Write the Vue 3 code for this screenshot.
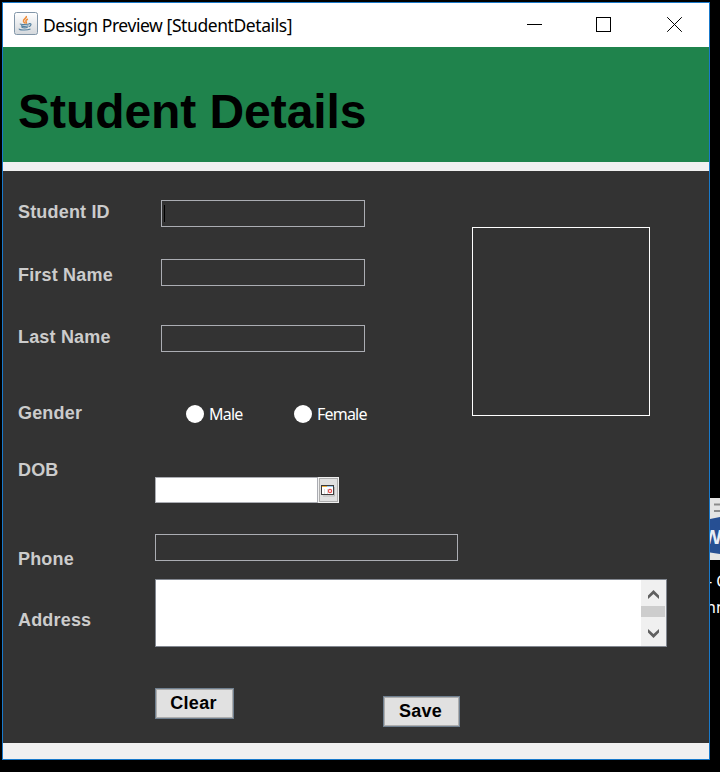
<script setup>
import { ref } from 'vue'

const student = ref({ id: '', firstName: '', lastName: '', gender: '', dob: '', phone: '', address: '' })
</script>

<template>
  <div class="desktop">
    <main class="window">
      <header class="titlebar">
        <svg class="java" width="24" height="23" viewBox="0 0 24 23">
          <defs>
            <linearGradient id="tile" x1="0" y1="0" x2="0" y2="1">
              <stop offset="0" stop-color="#ffffff" />
              <stop offset="1" stop-color="#d4d8dc" />
            </linearGradient>
          </defs>
          <rect x=".5" y=".5" width="23" height="22" rx="2" fill="url(#tile)" stroke="#8296a8" />
          <path d="M12.300 4c1 2.200-3.500 3-2.800 5.300.3.900 1 1.200 1.400 2M13.800 7c-1.700 1-2.500 1.800-1.500 3.200.3.600 0 1-.6 1.600" fill="none" stroke="#ef8a35" stroke-width="1.500" />
          <path d="M6.500 11.800c-1.500.8 7.500 1 9.300 0M7 13.600c1.500.8 5.500.8 7.500.2M7.500 15.200c1.500.7 4.500.7 6.200.1M15 11.600c2.800-.5 2.500 2.400-.2 3M5.500 16.800c-1.800 1.300 7.500 1.800 11 .2" fill="none" stroke="#54809f" stroke-width="1.200" />
        </svg>
        <span class="caption">Design Preview [StudentDetails]</span>
        <div class="controls">
          <svg width="15" height="15" viewBox="0 0 15 15"><path d="M0 7.500H15" /></svg>
          <svg class="maximize" width="15" height="15" viewBox="0 0 15 15"><rect x=".5" y=".5" width="14" height="14" /></svg>
          <svg width="15" height="15" viewBox="0 0 15 15"><path d="M.2.200 14.800 14.800M14.800.200.200 14.800" /></svg>
        </div>
      </header>

      <section class="banner"><h1>Student Details</h1></section>

      <form class="form" @submit.prevent>
        <div class="upper">
          <div class="identity">
            <div class="row row-id">
              <label>Student ID</label>
              <div class="field"><i class="caret"></i><input v-model="student.id" /></div>
            </div>
            <div class="row row-first">
              <label>First Name</label>
              <div class="field"><input v-model="student.firstName" /></div>
            </div>
            <div class="row row-last">
              <label>Last Name</label>
              <div class="field"><input v-model="student.lastName" /></div>
            </div>
            <div class="row row-gender">
              <label>Gender</label>
              <div class="radios">
                <span class="radio"><i></i><b class="male">Male</b></span>
                <span class="radio"><i></i><b class="female">Female</b></span>
              </div>
            </div>
          </div>
          <div class="photo"></div>
        </div>

        <div class="row row-dob">
          <label>DOB</label>
          <div class="date">
            <input v-model="student.dob" />
            <div class="picker">
              <svg width="14" height="12" viewBox="0 0 14 12">
                <path d="M2 11H13.500V2" fill="none" stroke="#b9b9b9" />
                <rect x=".5" y=".5" width="12" height="9" fill="#fff" stroke="#3c3c3c" />
                <path d="M1 1.500H6" stroke="#f0b040" />
                <path d="M6 1.500H12" stroke="#9cc8ee" />
                <path d="M3.500 4V9M6.500 4V9" stroke="#ddd" />
                <circle cx="9" cy="6" r="1.600" fill="#fff" stroke="#e05050" stroke-width="1.200" />
              </svg>
            </div>
          </div>
        </div>
        <div class="row row-phone">
          <label>Phone</label>
          <div class="field phone"><input v-model="student.phone" /></div>
        </div>
        <div class="row row-address">
          <label>Address</label>
          <div class="area">
            <textarea v-model="student.address"></textarea>
            <div class="scroll">
              <svg width="11" height="9" viewBox="0 0 11 9"><path d="M0 9V5.500L5.500 0 11 5.500V9L5.500 4Z" /></svg>
              <div class="thumb"></div>
              <svg width="11" height="9" viewBox="0 0 11 9"><path d="M0 0V3.500L5.500 9 11 3.500V0L5.500 5Z" /></svg>
            </div>
          </div>
        </div>
        <div class="actions">
          <button class="clear" type="button">Clear</button>
          <button class="save" type="button">Save</button>
        </div>
      </form>
    </main>

    <aside class="shortcut">
      <svg width="10" height="62" viewBox="0 0 10 62">
        <rect width="10" height="62" fill="#e4e4e4" />
        <path d="M4 6.500H10M4 13H10" stroke="#8b8b8b" stroke-width="2" />
        <path d="M0 21 10 19V56L0 54.500Z" fill="#264f93" />
      </svg>
      <span class="glyph">W</span>
      <span class="line one">- C</span>
      <span class="line two">nn</span>
    </aside>
  </div>
</template>

<style>
body { background: #000; }
</style>

<style scoped>
* { box-sizing: border-box; }
.desktop {
  display: flex;
  width: 720px;
  height: 772px;
  padding: 2px 0 0 2px;
  overflow: hidden;
  background: #000;
  font-family: "Liberation Sans", Arial, sans-serif;
}
.window {
  flex: none;
  width: 708px;
  height: 758px;
  border: 1px solid #1979ca;
  background: #f0f0f0;
}
.titlebar {
  display: flex;
  height: 44px;
  padding: 9px 27px 0 11px;
  background: #fff;
}
.java { flex: none; }
.caption {
  margin-left: 5px;
  font: 17.500px/26px "Noto Sans", "Open Sans", sans-serif;
  letter-spacing: -0.420px;
  white-space: nowrap;
  color: #000;
}
.controls {
  display: flex;
  margin: 5px 0 0 auto;
}
.controls svg { fill: none; stroke: #000; stroke-width: 1; }
.controls .maximize { margin: 0 56px 0 54px; }
.banner {
  height: 115px;
  padding: 38px 0 0 15px;
  background: #1f834c;
}
h1 {
  margin: 0;
  font-size: 48px;
  line-height: 54px;
  letter-spacing: -0.060px;
  color: #000;
  white-space: nowrap;
}
.form {
  height: 572px;
  margin-top: 9px;
  padding-left: 15px;
  background: #333;
}
.upper { display: flex; height: 269px; }
.identity { width: 454px; }
.photo {
  width: 178px;
  height: 189px;
  margin-top: 56px;
  border: 1px solid #fff;
}
.row { display: flex; align-items: flex-start; }
label {
  flex: none;
  width: 143px;
  font-size: 18px;
  font-weight: bold;
  line-height: 20px;
  letter-spacing: 0.180px;
  color: #ccc;
}
.field {
  display: flex;
  width: 204px;
  height: 27px;
  padding: 0 2px;
  border: 1px solid #abadb3;
}
.field input, .date input {
  flex: 1;
  min-width: 0;
  padding: 0;
  border: 0;
  outline: 0;
  background: transparent;
  color: #000;
}
.caret { width: 1px; height: 17px; margin-top: 4px; background: #000; }
.row-id { height: 69px; padding-top: 29px; }
.row-id label { margin-top: 2px; }
.row-first { height: 65px; padding-top: 19px; }
.row-first label { margin-top: 6px; }
.row-last { height: 75px; padding-top: 20px; }
.row-last label { margin-top: 2px; }
.row-gender { height: 60px; padding-top: 23px; }
.radios { display: flex; margin-left: 25px; padding-top: 2px; }
.radio { display: flex; width: 108px; gap: 5px; }
.radio i { flex: none; width: 18px; height: 18px; border-radius: 50%; background: #fff; }
.radio b {
  font: 16px/18px "Noto Sans", "Open Sans", sans-serif;
  letter-spacing: -0.800px;
  color: #fff;
}
.row-dob { height: 80px; padding-top: 20px; }
.row-dob label, .row-phone label, .row-address label { width: 137px; }
.date { display: flex; width: 184px; height: 26px; margin-top: 17px; }
.date input { border: 1px solid #abadb3; background: #fff; }
.picker {
  display: flex;
  width: 21px;
  padding: 7px 0 0 2px;
  border: 1px solid #f0f0f0;
  background: #e1e1e1;
  box-shadow: inset 0 0 0 1px #adadad;
}
.row-phone { height: 50px; padding-top: 14px; }
.row-phone label { margin-top: 15px; }
.phone { width: 303px; }
.row-address { height: 90px; padding-top: 9px; }
.row-address label { margin-top: 31px; }
.area {
  display: flex;
  width: 512px;
  height: 68px;
  border: 1px solid #828790;
  background: #fff;
}
textarea { flex: 1; padding: 0; border: 0; outline: 0; resize: none; overflow: hidden; background: #fff; }
.scroll {
  display: flex;
  flex-direction: column;
  align-items: center;
  width: 25px;
  padding-top: 10px;
  background: #f0f0f0;
}
.scroll svg { flex: none; fill: #606060; }
.thumb { width: 24px; height: 11px; margin: 7px 1px 12px 0; background: #cdcdcd; }
.actions { display: flex; align-items: flex-start; padding: 28px 0 0 137px; }
button {
  height: 31px;
  padding: 0 2px 0 0;
  border: 1px solid #708090;
  border-radius: 0;
  outline: 0;
  background: #e1e1e1;
  box-shadow: inset 0 0 0 1px #adadad;
  font: bold 18px/27px "Liberation Sans", Arial, sans-serif;
  letter-spacing: 0.300px;
  color: #000;
}
.clear { width: 79px; }
.save { width: 77px; margin: 8px 0 0 149px; }
.shortcut {
  position: relative;
  width: 10px;
  height: 140px;
  margin-top: 496px;
  overflow: hidden;
  color: #fff;
}
.shortcut svg { display: block; }
.glyph {
  position: absolute;
  top: 27px;
  left: -7px;
  font: bold 20px/24px "Liberation Sans", sans-serif;
  color: #e8edf5;
}
.line { position: absolute; font: 16px/20px "Noto Sans", sans-serif; white-space: pre; }
.one { top: 73px; left: -3px; }
.two { top: 99px; left: -4px; }
</style>
